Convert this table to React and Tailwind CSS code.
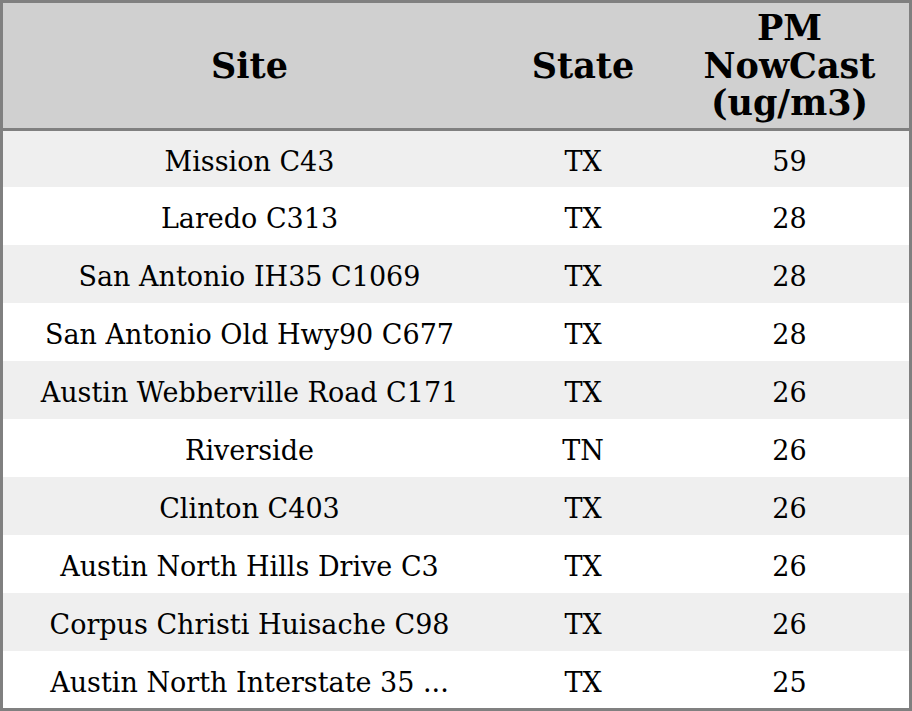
const rows = [
  ['Mission C43', 'TX', '59'],
  ['Laredo C313', 'TX', '28'],
  ['San Antonio IH35 C1069', 'TX', '28'],
  ['San Antonio Old Hwy90 C677', 'TX', '28'],
  ['Austin Webberville Road C171', 'TX', '26'],
  ['Riverside', 'TN', '26'],
  ['Clinton C403', 'TX', '26'],
  ['Austin North Hills Drive C3', 'TX', '26'],
  ['Corpus Christi Huisache C98', 'TX', '26'],
  ['Austin North Interstate 35 ...', 'TX', '25'],
]

export default function App() {
  return (
    <div className="w-[912px] h-[711px] bg-white overflow-hidden">
      <div className="h-full border-[3px] border-[#808080] overflow-hidden text-black font-['DejaVu_Serif',serif]">
        <div className="grid grid-cols-[493px_174px_1fr] h-[128px] bg-[#d0d0d0] border-b-[3px] border-[#808080] font-bold text-[35px] leading-[37.5px]">
          <div className="flex items-center justify-center text-center">Site</div>
          <div className="flex items-center justify-center text-center">State</div>
          <div className="flex items-center justify-center text-center">PM<br />NowCast<br />(ug/m3)</div>
        </div>
        {rows.map((r, i) => (
          <div
            key={i}
            className={`grid grid-cols-[493px_174px_1fr] ${i === 0 ? 'h-[56px]' : 'h-[58px]'} pt-[7px] text-[27px] ${i % 2 === 0 ? 'bg-[#efefef]' : 'bg-white'}`}
          >
            <div className="flex items-center justify-center whitespace-nowrap">{r[0]}</div>
            <div className="flex items-center justify-center">{r[1]}</div>
            <div className="flex items-center justify-center">{r[2]}</div>
          </div>
        ))}
      </div>
    </div>
  )
}
